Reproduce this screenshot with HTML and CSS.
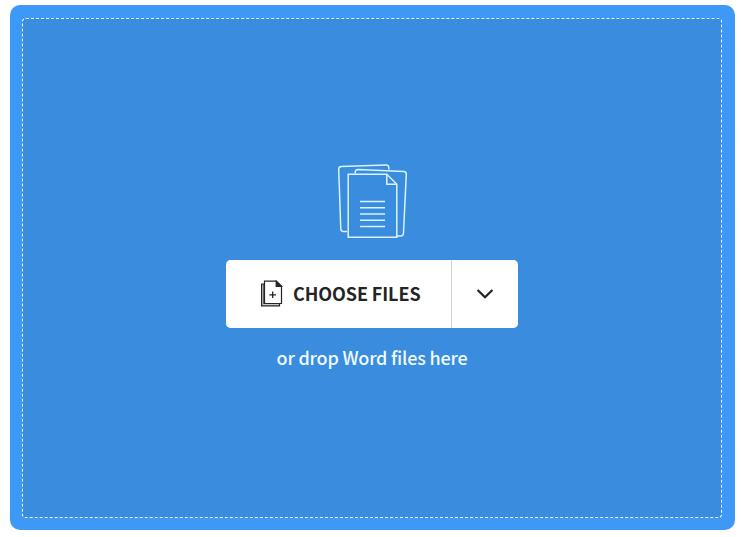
FILE: index.html
```html
<!DOCTYPE html>
<html lang="en">
<head>
<meta charset="utf-8">
<title>Choose files</title>
<link rel="stylesheet" href="styles.css">
</head>
<body>
<main class="uploader">
  <section class="dropzone">
    <svg class="documents" width="72" height="76" viewBox="0 0 72 76" fill="none" stroke="#d9f3ff" stroke-width="1.5" stroke-linejoin="round" aria-hidden="true">
      <path d="M11 68.5H7.5Q5 68.5 4.8 66L2.7 6.4Q2.6 3.6 5.3 3.4L50 2Q52.5 1.9 52.7 4.1L52.9 6.5"/>
      <path d="M19.3 10.5V8.8Q19.5 6.5 22 6.5L67.8 8.5Q70.4 8.7 70.3 11.3L67.5 70Q67.3 73 65 73H61"/>
      <path d="M12.2 11.3H50.8L60.8 21.3V74.2H12.2Z" stroke-linejoin="miter"/>
      <path d="M50.8 11.3V21.3H60.8" stroke-linejoin="miter"/>
      <path d="M24 38.5H49M24 44.7H49M24 51H49M24 57.3H49M24 63.5H49"/>
    </svg>
    <div class="actions">
      <button class="choose" type="button">
        <svg width="23" height="28" viewBox="0 0 23 28" fill="none" stroke="#242424" stroke-width="1.2" aria-hidden="true">
          <path d="M1.6 4H4V23.5H19.5V25.8H1.6Z" fill="#c8c8c8"/>
          <path d="M4.5 1.1H16.2L21.5 6.3V23.5H4.5Z" fill="#fff"/>
          <path d="M16.2 1.1V6.3H21.5Z" fill="#242424"/>
          <path d="M12.7 11.5V18.1M9.4 14.8H16" stroke-width="1.3"/>
        </svg>
        <span class="choose-label">CHOOSE FILES</span>
      </button>
      <button class="more" type="button" aria-label="More sources">
        <svg width="18" height="12" viewBox="0 0 18 12" fill="none" stroke="#242424" stroke-width="2.3" aria-hidden="true"><path d="M1.6 2L9 9.2L16.4 2"/></svg>
      </button>
    </div>
    <p class="hint">or drop Word files here</p>
  </section>
</main>
</body>
</html>
```
FILE: styles.css
```css
* { box-sizing: border-box; }
body {
  margin: 0;
  background: #fff;
  font-family: "Noto Sans CJK SC", "Noto Sans", sans-serif;
}
.uploader {
  width: 725px;
  height: 525px;
  margin: 5px 0 0 10px;
  padding: 13px 13px 12px 12px;
  border-radius: 10px;
  background: #3d99f5;
}
.dropzone {
  display: flex;
  flex-direction: column;
  align-items: center;
  height: 100%;
  padding-top: 144px;
  border: 1px dashed #fff;
  border-radius: 4px;
  background: #3a8cde;
}
.documents { display: block; }
.actions {
  display: flex;
  width: 292px;
  height: 68px;
  margin-top: 21px;
  border-radius: 5px;
  overflow: hidden;
  background: #fff;
}
button {
  display: flex;
  align-items: center;
  margin: 0;
  border: 0;
  padding: 0;
  background: #fff;
  color: #242424;
  font: inherit;
}
.choose {
  width: 226px;
  padding-left: 34px;
  gap: 10px;
  border-right: 1px solid #d3d3d3;
}
.choose-label {
  padding-bottom: 2px;
  font-size: 18px;
  font-weight: 700;
  line-height: 24px;
  letter-spacing: -0.1px;
  white-space: nowrap;
}
.more {
  flex: 1;
  justify-content: center;
}
.hint {
  margin: 17px 0 0;
  color: #effaff;
  font-size: 18px;
  font-weight: 500;
  line-height: 24px;
  letter-spacing: -0.2px;
  white-space: nowrap;
}
```
